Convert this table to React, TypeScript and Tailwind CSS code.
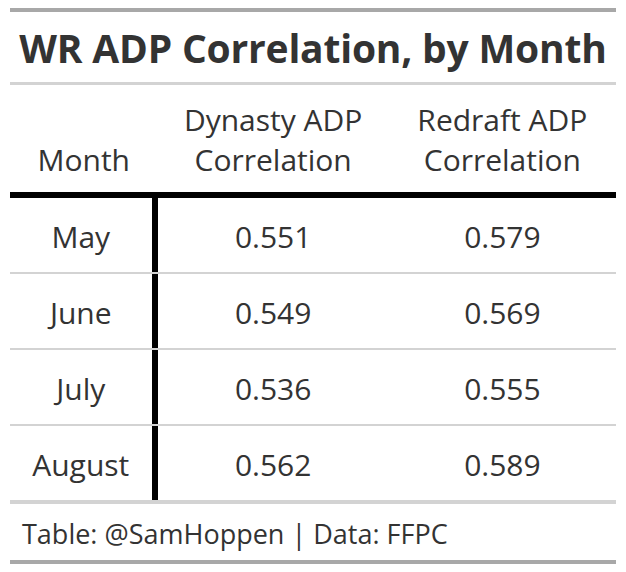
import React from "react";

const rows = [
  ["May", "0.551", "0.579"],
  ["June", "0.549", "0.569"],
  ["July", "0.536", "0.555"],
  ["August", "0.562", "0.589"],
];

export default function App() {
  return (
    <div
      className="w-[626px] h-[572px] bg-white pt-2 px-[10px] text-[#333333]"
      style={{ fontFamily: '"Open Sans", "Noto Sans", sans-serif' }}
    >
      <div className="border-t-4 border-b-[3px] border-t-[#a8a8a8] border-b-[#d3d3d3] h-[77px] flex items-center justify-center">
        <div className="text-[39px] font-bold leading-none tracking-[-0.2px]">WR ADP Correlation, by Month</div>
      </div>
      <div className="flex h-[107px] items-end pb-[12px] text-[30px] leading-[40px]">
        <div className="w-[148px] text-center">Month</div>
        <div className="w-[232px] text-center">Dynasty ADP<br />Correlation</div>
        <div className="w-[228px] text-center">Redraft ADP<br />Correlation</div>
      </div>
      <div className="h-[6px] bg-black" />
      {rows.map((r, i) => (
        <div
          key={r[0]}
          className={`flex text-[30px] ${i < rows.length - 1 ? "h-[76px] border-b-2 border-[#d3d3d3]" : "h-[74px]"}`}
        >
          <div className="w-[142px] flex items-center justify-center pt-[2px]">{r[0]}</div>
          <div className="w-[6px] bg-black" />
          <div className="w-[232px] flex items-center justify-center pt-[2px]">{r[1]}</div>
          <div className="w-[228px] flex items-center justify-center pt-[2px]">{r[2]}</div>
        </div>
      ))}
      <div className="border-t-4 border-b-4 border-t-[#d3d3d3] border-b-[#a8a8a8] h-[64px] flex items-center pl-[12px] pt-[4px] text-[27px]">
        Table: @SamHoppen | Data: FFPC
      </div>
    </div>
  );
}
